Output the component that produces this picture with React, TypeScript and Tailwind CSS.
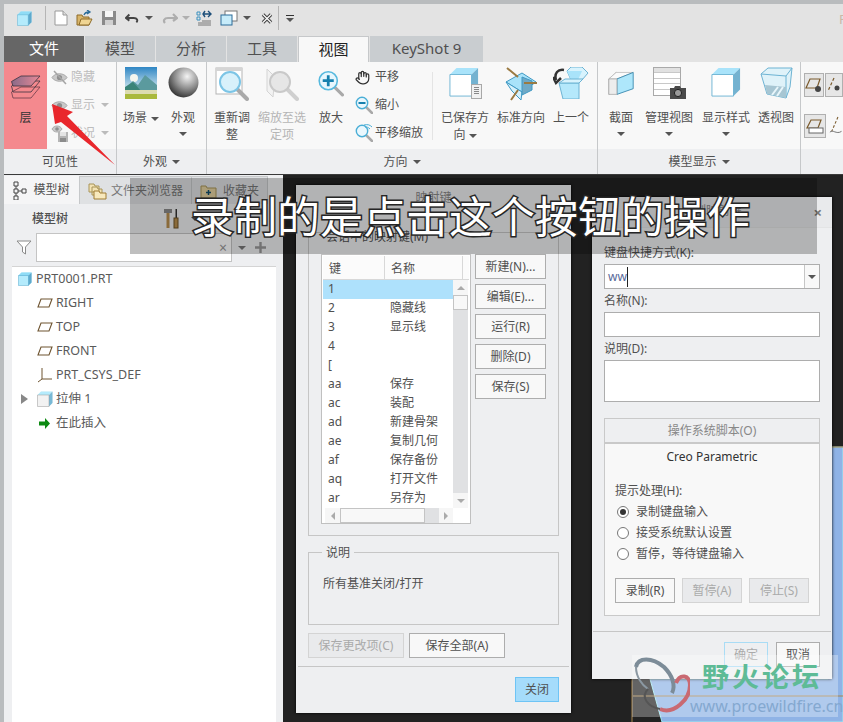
import type { ReactNode } from "react"
import { Hand } from "lucide-react"

const Caret = ({ className = "" }: { className?: string }) => (
  <span className={"inline-block h-0 w-0 border-x-[4px] border-t-[4px] border-x-transparent border-t-[#555] " + className} />
)

// cube with three faces, used all over the ribbon
function Cube({ size = 32, top = "#a9e3fa", side = "#74b2d0", front = "#ffffff", line = "#6db3d3" }: { size?: number; top?: string; side?: string; front?: string; line?: string }) {
  return (
    <svg width={size} height={size} viewBox="0 0 32 32">
      <path d="M1 8 L8 1 H31 V24 L24 31 H1 Z" fill={front} />
      <path d="M1 8 L8 1 H31 L24 8 Z" fill={top} />
      <path d="M24 8 L31 1 V24 L24 31 Z" fill={side} />
      <path d="M1 8 H24 V31 H1 Z" fill="none" stroke={line} strokeWidth="1" />
    </svg>
  )
}

function LayersIcon() {
  return (
    <svg width="32" height="24" viewBox="0 0 32 24">
      <defs>
        <linearGradient id="lay" x1="0" x2="1">
          <stop offset="0" stopColor="#8a6a88" />
          <stop offset="1" stopColor="#e88a98" />
        </linearGradient>
      </defs>
      <path d="M1.5 17 L11 12 H30 L21 23 H3 Z" fill="none" stroke="#6b3c4a" strokeWidth="0.8" />
      <path d="M1.5 11 L11 6 H30 L21 17 H3 Z" fill="none" stroke="#3a3340" strokeWidth="0.8" />
      <path d="M1.5 6.5 L11 1 H30 L21 11 H3 Z" fill="url(#lay)" stroke="#3a3340" strokeWidth="0.8" />
    </svg>
  )
}

function Eye({ slash = false }: { slash?: boolean }) {
  return (
    <svg width="17" height="15" viewBox="0 0 17 15">
      <path d="M1 7.5 C4 2.5 13 2.5 16 7.5 C13 12.5 4 12.5 1 7.5 Z" fill="#c9c9c9" stroke="#aaa" />
      <circle cx="8.5" cy="7.5" r="2.6" fill="#8f8f8f" />
      {slash && <path d="M3 1 L15 14" stroke="#a5a5a5" strokeWidth="1.5" />}
    </svg>
  )
}

function EyeSave() {
  return (
    <svg width="18" height="18" viewBox="0 0 18 18">
      <path d="M1 5 C3 1 9 1 11 5 C9 9 3 9 1 5 Z" fill="#c9c9c9" stroke="#aaa" />
      <circle cx="6" cy="5" r="1.8" fill="#8f8f8f" />
      <path d="M7 8 H17 V18 H7 Z" fill="#b5b5b5" />
      <path d="M9 8 H15 V12 H9 Z" fill="#e4e4e4" />
      <path d="M9 14 H15 V18 H9 Z" fill="#8c8c8c" />
    </svg>
  )
}

function Scene() {
  return (
    <svg width="32" height="32" viewBox="0 0 32 32">
      <defs>
        <linearGradient id="sky" x1="0" x2="0" y1="0" y2="1">
          <stop offset="0" stopColor="#2f86c4" />
          <stop offset="1" stopColor="#cfe6ee" />
        </linearGradient>
      </defs>
      <rect width="32" height="22" fill="url(#sky)" />
      <circle cx="9" cy="11" r="4" fill="#f4f6ee" />
      <path d="M0 21 L8 14 L13 18 L20 8 L32 18 V24 H0 Z" fill="#5b9a9e" />
      <path d="M0 20 L8 15 L16 24 H0 Z" fill="#3a8478" />
      <rect y="23" width="32" height="4" fill="#dcdcb0" />
      <rect y="27" width="32" height="5" fill="#a9b93c" />
    </svg>
  )
}

function Sphere() {
  return (
    <svg width="31" height="31" viewBox="0 0 31 31">
      <defs>
        <radialGradient id="sph" cx="0.62" cy="0.3" r="0.75">
          <stop offset="0" stopColor="#f4f4f4" />
          <stop offset="0.55" stopColor="#8c8c8c" />
          <stop offset="1" stopColor="#2f2f2f" />
        </radialGradient>
      </defs>
      <circle cx="15.5" cy="15.5" r="15" fill="url(#sph)" />
    </svg>
  )
}

function Refit({ dim = false }: { dim?: boolean }) {
  const c = dim ? "#cfcfcf" : "#a9a9a9"
  return (
    <svg width="34" height="34" viewBox="0 0 34 34">
      {!dim && <rect x="1" y="1" width="26" height="26" fill="#fff" stroke="#b5b5b5" />}
      {!dim && <rect x="1" y="1" width="26" height="3" fill="#d5d5d5" />}
      {dim && <path d="M2 2 L10 10 L8 30 L2 24 Z" fill="#f2f2f2" stroke="#d4d4d4" />}
      <path d="M22 22 L32 32" stroke={c} strokeWidth="4" strokeLinecap="round" />
      <circle cx="15" cy="15" r="10" fill={dim ? "#e6e6e6" : "#d8f1fb"} stroke={dim ? "#c9c9c9" : "#7cc5e6"} strokeWidth="2" />
    </svg>
  )
}

function ZoomIn() {
  return (
    <svg width="33" height="33" viewBox="0 0 33 33">
      <path d="M21 21 L31 31" stroke="#a9a9a9" strokeWidth="4" strokeLinecap="round" />
      <circle cx="13" cy="13" r="11.5" fill="#e6f6fd" stroke="#56b9de" strokeWidth="2" />
      <path d="M13 6 V20 M6 13 H20" stroke="#1580ae" strokeWidth="3.5" />
    </svg>
  )
}

function SmallLens({ kind }: { kind: "minus" | "pan" }) {
  return (
    <svg width="18" height="18" viewBox="0 0 18 18">
      <path d="M11 11 L17 17" stroke="#a9a9a9" strokeWidth="2.5" strokeLinecap="round" />
      <circle cx="7" cy="7" r="5.7" fill="#eaf7fd" stroke="#4aaed6" strokeWidth="1.4" />
      {kind === "minus" && <path d="M3.5 7 H10.5" stroke="#1580ae" strokeWidth="2" />}
      {kind === "pan" && <path d="M9 1 C13 0 15 1 17 3 M10 3 C12 3 13 3 15 5" stroke="#4aaed6" fill="none" />}
    </svg>
  )
}

function SavedView() {
  return (
    <div className="relative h-[32px] w-[32px]">
      <Cube size={30} />
      <div className="absolute right-[-1px] bottom-0 flex h-[15px] w-[11px] flex-col gap-[1px] border border-[#a8a8a8] bg-[#f1f1f1] p-[2px]">
        <span className="h-px bg-[#888]" />
        <span className="h-px bg-[#888]" />
        <span className="h-px bg-[#888]" />
        <span className="h-px bg-[#888]" />
      </div>
    </div>
  )
}

function StdView() {
  return (
    <svg width="34" height="34" viewBox="0 0 34 34">
      <path d="M2 15 L18 6 L32 15 L18 25 Z" fill="#a9e3fa" stroke="#3f99c4" />
      <path d="M2 15 L18 25 L17 33 L8 24 Z" fill="#d6f1fb" stroke="#3f99c4" />
      <path d="M18 10 L28 14 V23 L18 28 Z" fill="#6fa9c6" stroke="#3f99c4" />
      <path d="M3 1 L14 10 M20 16 H33 M14 23 L7 33" stroke="#9a7a42" strokeWidth="2" />
    </svg>
  )
}

function PrevView() {
  return (
    <svg width="36" height="32" viewBox="0 0 36 32">
      <path d="M14 4 L18 0 H29 L35 6 L29 13 H18 Z" fill="#d8f3fd" stroke="#6db3d3" />
      <path d="M14 4 H29 L25 13 H18 Z" fill="#a9e3fa" />
      <path d="M6 16 L10 32 H26 V16 Z" fill="#b5e8fb" stroke="#6db3d3" />
      <path d="M6 16 L12 12 H30 L26 16 Z" fill="#d8f3fd" stroke="#6db3d3" />
      <path d="M11 3 C5 2 1 6 3 13 M0 10 L3 16 L8 11" fill="none" stroke="#333" strokeWidth="2.5" />
    </svg>
  )
}

function SectionIcon() {
  return (
    <svg width="32" height="32" viewBox="0 0 32 32">
      <path d="M1 11 L10 3 V23 L1 30 Z" fill="#e9e9e9" stroke="#aaa" />
      <path d="M1 11 L10 3 H31 L11 11 Z" fill="#fbfbfb" stroke="#bbb" />
      <path d="M11 11 L31 3 V23 L11 30 Z" fill="#aee7fb" stroke="#2b7fa8" />
      <path d="M1 11 H11 V30 H1 Z" fill="#ededed" stroke="#aaa" />
    </svg>
  )
}

function ViewTable() {
  return (
    <div className="relative h-[32px] w-[32px]">
      <div className="grid h-[29px] w-[28px] grid-cols-[9px_1fr] grid-rows-5 divide-y divide-[#c8c8c8] border border-[#a9a9a9] bg-white">
        <span className="col-span-2 bg-[#e1e1e1]" />
        <span className="col-span-2" />
        <span className="col-span-2" />
        <span className="col-span-2" />
        <span className="col-span-2" />
      </div>
      <svg className="absolute right-[-1px] bottom-0" width="16" height="13" viewBox="0 0 16 13">
        <path d="M0 2 H4 L5 0 H10 L11 2 H16 V13 H0 Z" fill="#4a4a4a" />
        <circle cx="8" cy="7" r="3.6" fill="#9a9a9a" stroke="#222" />
      </svg>
    </div>
  )
}

function Glass() {
  return (
    <svg width="33" height="32" viewBox="0 0 33 32">
      <path d="M1 7 L8 1 H32 L30 20 L26 31 L7 27 Z" fill="#dff2f9" stroke="#6db3d3" />
      <path d="M1 7 L26 9 L32 1" fill="none" stroke="#6db3d3" />
      <path d="M26 9 V31" stroke="#6db3d3" />
      <path d="M5 18 L26 20 L26 31 L7 27 Z" fill="#a7c6d3" />
      <path d="M12 28 L18 20 M17 29 L23 20" stroke="#e8f6fb" strokeWidth="2" />
    </svg>
  )
}

function Big({ icon, children, caret, dim, className = "" }: { icon: ReactNode; children: ReactNode; caret?: boolean; dim?: boolean; className?: string }) {
  return (
    <div className={"flex shrink-0 flex-col items-center text-center leading-[17px] " + (dim ? "text-[#b5b5b5] " : "") + className}>
      <div className="flex h-[47px] w-full items-start justify-center pt-[5px]">{icon}</div>
      <div>{children}</div>
      {caret && <Caret className="mt-[6px]" />}
    </div>
  )
}

function Small({ icon, text, caret, dim }: { icon: ReactNode; text: string; caret?: boolean; dim?: boolean }) {
  return (
    <div className={"flex h-[28px] items-center whitespace-nowrap " + (dim ? "text-[#bdbdbd]" : "")}>
      <span className="flex w-[20px] shrink-0 justify-start">{icon}</span>
      <span>{text}</span>
      {caret && <Caret className="ml-[6px] border-t-[#bbb]" />}
    </div>
  )
}

function Group({ label, caret, className, children }: { label: string; caret?: boolean; className: string; children: ReactNode }) {
  return (
    <div className={"flex shrink-0 flex-col border-r border-[#c6c8ca] " + className}>
      <div className="flex h-[87px] bg-[#f8f8f8]">{children}</div>
      <div className="flex h-[25px] items-center justify-center gap-[5px] bg-[#eeeff1]">
        {label}
        {caret && <Caret />}
      </div>
    </div>
  )
}

function QuickBar() {
  return (
    <div className="relative flex h-[32px] items-center bg-[#e3e3e3] pb-[4px]">
      <span className="ml-[13px] flex">
        <Cube size={15} side="#5fa9cc" line="#58abd0" top="#8fdcf6" front="#b4ebfc" />
      </span>
      <span className="ml-[13px] h-[24px] w-px bg-[#b5b5b5]" />
      <svg className="ml-[8px]" width="14" height="16" viewBox="0 0 14 16">
        <path d="M1 1 H9 L13 5 V15 H1 Z" fill="#fff" stroke="#999" />
        <path d="M9 1 V5 H13" fill="#ddd" stroke="#999" />
      </svg>
      <svg className="ml-[8px]" width="17" height="16" viewBox="0 0 17 16">
        <path d="M1 5 H6 L7 7 H13 V15 H1 Z" fill="#d8b56a" stroke="#8d6b28" />
        <path d="M3 15 L5 9 H16 L13 15 Z" fill="#f0d593" stroke="#8d6b28" />
        <path d="M8 5 C9 2 11 2 13 2 M11 0 L14 2 L11 4" fill="none" stroke="#2d6d9a" strokeWidth="1.3" />
      </svg>
      <svg className="ml-[8px]" width="16" height="16" viewBox="0 0 16 16">
        <path d="M1 1 H15 V15 H1 Z" fill="#8a8a8a" />
        <path d="M4 1 H12 V7 H4 Z" fill="#f6f6f6" />
        <path d="M4 10 H12 V15 H4 Z" fill="#d0d0d0" />
      </svg>
      <svg className="ml-[8px]" width="14" height="12" viewBox="0 0 16 12">
        <path d="M5 2 L1 6 L5 9 M2 6 H10 C14 6 15 9 13 11" fill="none" stroke="#444" strokeWidth="2.2" />
      </svg>
      <Caret className="ml-[6px] border-t-[#444]" />
      <svg className="ml-[9px]" width="16" height="12" viewBox="0 0 16 12">
        <path d="M11 2 L15 6 L11 9 M14 6 H6 C2 6 1 9 3 11" fill="none" stroke="#aeaeae" strokeWidth="2.2" />
      </svg>
      <Caret className="ml-[4px] border-t-[#b0b0b0]" />
      <svg className="ml-[6px]" width="16" height="16" viewBox="0 0 16 16">
        <path d="M1 2 H4 V5 H1 Z M1 7 H4 V10 H1 Z" fill="none" stroke="#3b90bf" />
        <path d="M6 11 H15 M2 13 H15 M2 15 H15" stroke="#777" />
        <path d="M7 4 H15 M12 1 L15 4 L12 7 M9 1 L7 4 L9 7" fill="none" stroke="#1d4f7a" strokeWidth="1.4" />
      </svg>
      <svg className="ml-[8px]" width="18" height="16" viewBox="0 0 18 16">
        <rect x="5" y="1" width="12" height="10" fill="#fff" stroke="#777" />
        <rect x="1" y="5" width="11" height="10" fill="#c7ecfa" stroke="#2d6d9a" />
      </svg>
      <Caret className="ml-[5px] border-t-[#444]" />
      <svg className="ml-[10px]" width="12" height="11" viewBox="0 0 12 11">
        <path d="M2 1.5 L10 9.5 M10 1.5 L2 9.5" stroke="#444" strokeWidth="3.4" />
        <path d="M2 1.5 L10 9.5 M10 1.5 L2 9.5" stroke="#fff" strokeWidth="1.2" />
      </svg>
      <span className="ml-[5px] h-[24px] w-px bg-[#b5b5b5]" />
      <span className="ml-[7px] flex flex-col items-center gap-[2px]">
        <span className="h-px w-[8px] bg-[#333]" />
        <Caret className="border-t-[#333]" />
      </span>
      <span className="absolute top-[6px] left-[835px] w-[4px] overflow-hidden text-[13px] text-[#c9b8a8]">P</span>
    </div>
  )
}

function Tabs() {
  const tab = "flex h-[26px] w-[70px] items-center justify-center bg-[#c9cdd0] pb-[2px]"
  return (
    <div className="flex h-[26px] gap-px bg-[#e3e3e3] text-[15px] leading-none text-[#505050]">
      <div className="flex h-[26px] w-[80px] items-center justify-center bg-[#666666] pb-[2px] text-white">文件</div>
      <div className={tab}>模型</div>
      <div className={tab}>分析</div>
      <div className={tab}>工具</div>
      <div className="flex h-[27px] w-[71px] items-center justify-center border-x border-t border-[#c6c8ca] bg-[#f8f8f8] pb-[2px] text-[#222]">视图</div>
      <div className="flex h-[26px] w-[113px] items-center justify-center bg-[#c9cdd0] pb-[2px]">KeyShot 9</div>
    </div>
  )
}

function Ribbon() {
  return (
    <div className="flex h-[113px] w-[839px] overflow-hidden border-b border-[#3a3a3a] text-[12px] text-[#505050]">
      <Group label="可见性" className="w-[113px]">
        <div className="flex w-[43px] shrink-0 flex-col items-center bg-[#f4898e] pt-[13px] text-[#333]">
          <LayersIcon />
          <span className="mt-[10px] leading-[17px]">层</span>
        </div>
        <div className="ml-[4px] pt-[1px]">
          <Small dim icon={<Eye slash />} text="隐藏" />
          <Small dim icon={<Eye />} text="显示" caret />
          <Small dim icon={<EyeSave />} text="状况" caret />
        </div>
      </Group>
      <Group label="外观" caret className="w-[90px]">
        <Big className="ml-[4px] w-[40px]" icon={<Scene />}>
          场景 <Caret className="ml-[1px] align-middle" />
        </Big>
        <Big caret className="ml-[4px] w-[36px]" icon={<Sphere />}>外观</Big>
      </Group>
      <Group label="方向" caret className="w-[391px]">
        <Big className="ml-[7px] w-[36px]" icon={<Refit />}>重新调整</Big>
        <Big dim className="ml-[7px] w-[50px]" icon={<Refit dim />}>缩放至选定项</Big>
        <Big className="ml-[11px] w-[26px]" icon={<ZoomIn />}>放大</Big>
        <div className="ml-[11px] w-[70px] pt-[1px]">
          <Small icon={<Hand size={15} color="#333" />} text="平移" />
          <Small icon={<SmallLens kind="minus" />} text="缩小" />
          <Small icon={<SmallLens kind="pan" />} text="平移缩放" />
        </div>
        <span className="mt-[10px] ml-[7px] h-[68px] w-px shrink-0 bg-[#e4e4e4]" />
        <Big className="ml-[7px] w-[50px]" icon={<SavedView />}>
          已保存方向 <Caret className="align-middle" />
        </Big>
        <Big className="ml-[6px] w-[50px]" icon={<StdView />}>标准方向</Big>
        <Big className="ml-[6px] w-[38px]" icon={<PrevView />}>上一个</Big>
      </Group>
      <Group label="模型显示" caret className="w-[203px]">
        <Big caret className="ml-[10px] w-[26px]" icon={<SectionIcon />}>截面</Big>
        <Big caret className="ml-[10px] w-[50px]" icon={<ViewTable />}>管理视图</Big>
        <Big caret className="ml-[7px] w-[50px]" icon={<Cube size={30} />}>显示样式</Big>
        <Big className="ml-[7px] w-[36px]" icon={<Glass />}>透视图</Big>
      </Group>
      <div className="flex w-[42px] shrink-0 flex-col bg-[#eeeff1]">
        <div className="flex h-[87px] flex-col gap-[17px] bg-[#f8f8f8] pt-[11px] pl-[3px]">
          <div className="flex gap-px">
            <span className="flex h-[24px] w-[24px] items-center justify-center border border-[#b0b0b0] bg-[#e6e6e6]">
              <svg width="18" height="16" viewBox="0 0 18 16">
                <path d="M5 2 H15 L12 11 H1 Z" fill="none" stroke="#7a5a2c" strokeWidth="1.2" />
                <circle cx="13" cy="12" r="3" fill="#444" />
              </svg>
            </span>
            <span className="flex h-[24px] w-[24px] items-center justify-center border border-[#b0b0b0] bg-[#e6e6e6]">
              <svg width="16" height="16" viewBox="0 0 16 16">
                <path d="M8 1 L2 14" stroke="#7a5a2c" strokeDasharray="3 2" strokeWidth="1.2" />
                <circle cx="11" cy="11" r="2.5" fill="#444" />
              </svg>
            </span>
          </div>
          <div className="flex gap-[3px]">
            <span className="flex h-[24px] w-[24px] items-center justify-center border border-[#b0b0b0] bg-[#e6e6e6]">
              <svg width="18" height="16" viewBox="0 0 18 16">
                <path d="M5 2 H15 L12 10 H1 Z" fill="none" stroke="#7a5a2c" strokeWidth="1.2" />
                <rect x="3" y="10" width="14" height="5" fill="#fff" stroke="#666" />
              </svg>
            </span>
            <svg width="16" height="24" viewBox="0 0 16 24">
              <path d="M10 2 L3 18" stroke="#7a5a2c" strokeDasharray="3 2" strokeWidth="1.2" />
              <path d="M1 19 C4 15 8 22 14 18" fill="none" stroke="#666" />
            </svg>
          </div>
        </div>
      </div>
    </div>
  )
}

function TreeRow({ icon, children, arrow, indent = true }: { icon: ReactNode; children: ReactNode; arrow?: boolean; indent?: boolean }) {
  return (
    <div className="relative flex h-[24px] items-center whitespace-nowrap">
      {arrow && <span className="absolute left-[9px] h-0 w-0 border-y-[5px] border-l-[7px] border-y-transparent border-l-[#888]" />}
      <span className={"flex w-[20px] shrink-0 justify-center " + (indent ? "ml-[23px]" : "ml-[3px]")}>{icon}</span>
      <span className="ml-[1px]">{children}</span>
    </div>
  )
}

const PlaneIcon = () => (
  <svg width="16" height="10" viewBox="0 0 16 10">
    <path d="M4 1 H15 L12 9 H1 Z" fill="none" stroke="#6e5430" strokeWidth="1.1" />
  </svg>
)

function LeftPanel() {
  return (
    <div className="flex h-full w-[279px] shrink-0 flex-col bg-[#eeeff1] text-[#505050]">
      <div className="mt-[1px] flex h-[28px] text-[12px]">
        <div className="flex w-[76px] items-center justify-center gap-[6px] border-r border-[#c6c8ca] bg-[#f5f5f6]">
          <svg width="14" height="19" viewBox="0 0 14 19">
            <path d="M1 1 H5 V5 H1 Z M1 8 H5 V12 H1 Z M1 15 H5 V19 H1 Z M9 8 H13 V12 H9 Z M3 5 V8 M3 12 V15 M5 10 H9" fill="none" stroke="#444" />
          </svg>
          模型树
        </div>
        <div className="flex w-[112px] items-center justify-center gap-[4px] border-t border-r border-[#c6c8ca] bg-[#dfe1e3] text-[#777]">
          <svg width="19" height="19" viewBox="0 0 19 19">
            <path d="M1 3 H6 L7 5 H11 V11 H1 Z M4 6 H9 L10 8 H14 V14 H4 Z" fill="#f3e3b4" stroke="#a89458" />
            <path d="M6 10 H11 L12 12 H18 V18 H6 Z" fill="#f8e9bd" stroke="#a07c35" />
          </svg>
          文件夹浏览器
        </div>
        <div className="flex w-[76px] items-center justify-center gap-[6px] border-t border-r border-[#c6c8ca] bg-[#dfe1e3] text-[#777]">
          <svg width="17" height="15" viewBox="0 0 17 15">
            <path d="M1 3 H6 L7 5 H16 V15 H1 Z" fill="#e4d2a0" stroke="#a89458" />
            <path d="M8.5 7 V12 M6 9.5 H11" stroke="#14506e" strokeWidth="1.5" />
          </svg>
          收藏夹
        </div>
      </div>
      <div className="flex h-[29px] items-center text-[12px] font-medium">
        <span className="ml-[28px]">模型树</span>
        <svg className="ml-[95px]" width="17" height="21" viewBox="0 0 17 21">
          <path d="M1 1 H9 V5 H1 Z" fill="#8a8a8a" />
          <rect x="3.5" y="5" width="3" height="15" fill="#b98f4f" />
          <rect x="12.5" y="1" width="1.5" height="9" fill="#333" />
          <rect x="11" y="10" width="4" height="10" fill="#b98f4f" stroke="#6c5226" />
        </svg>
        <Caret className="ml-[11px] border-t-[#555]" />
      </div>
      <div className="flex h-[29px] items-center">
        <svg className="ml-[12px]" width="16" height="15" viewBox="0 0 16 15">
          <path d="M1 1 H15 L9.5 7 V14 L6.5 12 V7 Z" fill="#fff" stroke="#8a8a8a" />
        </svg>
        <div className="relative ml-[4px] h-[29px] w-[196px] border border-[#c4c4c4] bg-white">
          <span className="absolute top-[7px] right-[4px] text-[14px] leading-[14px] text-[#999]">×</span>
        </div>
        <Caret className="ml-[6px] border-t-[#777]" />
        <svg className="ml-[9px]" width="11" height="11" viewBox="0 0 11 11">
          <path d="M5.5 0 V11 M0 5.5 H11" stroke="#999" strokeWidth="2.4" />
        </svg>
      </div>
      <div className="mt-[4px] ml-[8px] w-[264px] flex-1 border-t border-[#d4d4d4] bg-white text-[12.5px] text-[#5a5a5a]">
        <TreeRow indent={false} icon={<Cube size={14} front="#b4ebfc" top="#8fdcf6" side="#5fa9cc" line="#3f99c4" />}>PRT0001.PRT</TreeRow>
        <TreeRow icon={<PlaneIcon />}>RIGHT</TreeRow>
        <TreeRow icon={<PlaneIcon />}>TOP</TreeRow>
        <TreeRow icon={<PlaneIcon />}>FRONT</TreeRow>
        <TreeRow
          icon={
            <svg width="16" height="16" viewBox="0 0 16 16">
              <path d="M5 1 V12 L1 15 M5 12 H15" fill="none" stroke="#6e5430" />
            </svg>
          }
        >
          PRT_CSYS_DEF
        </TreeRow>
        <TreeRow arrow icon={<Cube size={16} front="#f2f2f2" top="#b4ebfc" side="#78b9d6" line="#999" />}>
          拉伸 1
        </TreeRow>
        <TreeRow
          icon={
            <svg width="12" height="11" viewBox="0 0 12 11">
              <path d="M0 3.5 H6 V0 L11 5.5 L6 11 V7.5 H0 Z" fill="#0d8a12" />
            </svg>
          }
        >
          在此插入
        </TreeRow>
      </div>
    </div>
  )
}

const btn = "flex items-center justify-center border border-[#adadad] bg-[#f8f8f8] text-[12px] text-[#505050]"
const dimBtn = "flex items-center justify-center border border-[#d4d4d4] bg-[#e9eaec] text-[12px] text-[#aaa]"

const keys: [string, string][] = [
  ["2", "隐藏线"],
  ["3", "显示线"],
  ["4", ""],
  ["[", ""],
  ["aa", "保存"],
  ["ac", "装配"],
  ["ad", "新建骨架"],
  ["ae", "复制几何"],
  ["af", "保存备份"],
  ["aq", "打开文件"],
  ["ar", "另存为"],
]

function MappingDialog() {
  return (
    <div className="absolute top-[10px] left-[13px] flex h-[528px] w-[275px] flex-col bg-[#eeeff1] text-[12px] text-[#505050] shadow-[0_0_3px_#000]">
      <div className="h-[24px] pt-[6px] text-center leading-[14px] text-[#888]">映射键</div>
      <div className="relative mx-[12px] mt-[23px] h-[304px] border border-[#c6c6c6]">
        <span className="absolute top-[-4px] left-[16px] bg-[#eeeff1] px-[1px] leading-[16px]">会话中的映射键(M)</span>
        <div className="mt-[21px] flex">
          <div className="ml-[12px] h-[270px] w-[150px] border border-[#c0c0c0] bg-white p-px">
            <div className="flex h-[24px] border-b border-[#d8d8d8] bg-[#fbfbfb]">
              <span className="w-[62px] border-r border-[#d8d8d8] pt-[5px] pl-[6px] leading-[16px]">键</span>
              <span className="w-[78px] border-r border-[#d8d8d8] pt-[5px] pl-[6px] leading-[16px]">名称</span>
            </div>
            <div className="flex h-[228px]">
              <div className="w-[130px] shrink-0 leading-[18px]">
                <div className="h-[19px] bg-[#aee1fc] pl-[5px]">1</div>
                {keys.map(([k, n]) => (
                  <div key={k} className="flex h-[19px]">
                    <span className="w-[67px] pl-[5px]">{k}</span>
                    <span>{n}</span>
                  </div>
                ))}
              </div>
              <div className="flex w-[15px] flex-col bg-[#e0e1e3]">
                <span className="flex h-[15px] items-center justify-center bg-[#f6f6f6]">
                  <Caret className="rotate-180 border-t-[#aaa]" />
                </span>
                <span className="h-[15px] border border-[#c4c4c4] bg-[#f8f8f8]" />
                <span className="flex-1" />
                <span className="flex h-[15px] items-center justify-center bg-[#f6f6f6]">
                  <Caret className="border-t-[#aaa]" />
                </span>
              </div>
            </div>
            <div className="mx-[2px] flex h-[15px] w-[128px] items-center bg-[#f6f6f6]">
              <span className="flex w-[15px] justify-center">
                <span className="h-0 w-0 border-y-[4px] border-r-[4px] border-y-transparent border-r-[#aaa]" />
              </span>
              <span className="h-[15px] w-[85px] border border-[#c4c4c4] bg-[#f8f8f8]" />
              <span className="h-[15px] flex-1 bg-[#e0e1e3]" />
              <span className="flex w-[14px] justify-center">
                <span className="h-0 w-0 border-y-[4px] border-l-[4px] border-y-transparent border-l-[#aaa]" />
              </span>
            </div>
          </div>
          <div className="ml-[4px] flex w-[71px] flex-col gap-[5px]">
            <div className={btn + " h-[25px]"}>新建(N)...</div>
            <div className={btn + " h-[25px]"}>编辑(E)...</div>
            <div className={btn + " h-[25px]"}>运行(R)</div>
            <div className={btn + " h-[25px]"}>删除(D)</div>
            <div className={btn + " h-[25px]"}>保存(S)</div>
          </div>
        </div>
      </div>
      <div className="relative mx-[12px] mt-[16px] h-[73px] border border-[#c6c6c6]">
        <span className="absolute top-[-8px] left-[13px] bg-[#eeeff1] px-[4px] leading-[16px]">说明</span>
        <div className="mt-[23px] ml-[14px] leading-[16px]">所有基准关闭/打开</div>
      </div>
      <div className="mx-[12px] mt-[8px] flex gap-[5px]">
        <div className={dimBtn + " h-[25px] w-[96px]"}>保存更改项(C)</div>
        <div className={btn + " h-[25px] w-[96px]"}>保存全部(A)</div>
      </div>
      <div className="mx-[2px] mt-[8px] border-t border-[#c6c6c6]" />
      <div className="mt-[10px] flex justify-end pr-[12px]">
        <div className="flex h-[25px] w-[44px] items-center justify-center border border-[#6ec4f5] bg-[#a5dcfb]">关闭</div>
      </div>
    </div>
  )
}

function Radio({ on, children }: { on?: boolean; children: string }) {
  return (
    <div className="flex h-[21px] items-center">
      <span className="flex h-[12px] w-[12px] items-center justify-center rounded-full border border-[#777] bg-white">
        {on && <span className="h-[6px] w-[6px] rounded-full bg-[#333]" />}
      </span>
      <span className="ml-[7px]">{children}</span>
    </div>
  )
}

function RecordDialog() {
  const field = "h-[25px] border border-[#adadad] bg-white"
  return (
    <div className="absolute top-[22px] left-[309px] flex h-[482px] w-[240px] flex-col bg-[#eeeff1] text-[12px] text-[#505050] shadow-[0_0_3px_#000]">
      <div className="relative h-[31px] border-b border-[#e3e4e5] bg-[#e9eaec] pt-[7px] text-center leading-[14px] text-[#888]">
        录制映射键
        <span className="absolute top-[6px] right-[10px] text-[15px] leading-[18px] font-bold text-[#777]">×</span>
      </div>
      <div className="flex flex-1 flex-col px-[12px] pt-[17px] leading-[16px]">
        <div>键盘快捷方式(K):</div>
        <div className={field + " mt-[3px] flex items-center"}>
          <span className="ml-[3px] text-[#5a6a9a]">ww</span>
          <span className="h-[20px] w-px bg-[#222]" />
          <span className="ml-auto flex h-full w-[15px] items-center justify-center border-l border-[#c6c6c6] bg-[#f8f8f8]">
            <Caret />
          </span>
        </div>
        <div className="mt-[4px]">名称(N):</div>
        <div className={field + " mt-[3px]"} />
        <div className="mt-[4px]">说明(D):</div>
        <div className="mt-[3px] h-[42px] border border-[#adadad] bg-white" />
        <div className="mt-[16px] flex h-[25px] items-center justify-center border border-[#c9c9c9] text-[#888]">操作系统脚本(O)</div>
        <div className="flex h-[173px] flex-col border border-[#c9c9c9] bg-[#f8f8f8] px-[10px]">
          <div className="mt-[5px] text-center leading-[16px] text-[#333]">Creo Parametric</div>
          <div className="mt-[18px]">提示处理(H):</div>
          <div className="mt-[2px] pl-[2px]">
            <Radio on>录制键盘输入</Radio>
            <Radio>接受系统默认设置</Radio>
            <Radio>暂停，等待键盘输入</Radio>
          </div>
          <div className="mt-[14px] flex gap-[7px]">
            <div className={btn + " h-[25px] w-[60px]"}>录制(R)</div>
            <div className={dimBtn + " h-[25px] w-[60px]"}>暂停(A)</div>
            <div className={dimBtn + " h-[25px] w-[60px]"}>停止(S)</div>
          </div>
        </div>
      </div>
      <div className="mx-[1px] mt-[14px] border-t border-[#c6c6c6]" />
      <div className="flex h-[47px] justify-end gap-[8px] pt-[10px] pr-[12px]">
        <div className="flex h-[25px] w-[44px] items-center justify-center border border-[#a9dcf5] text-[#aaa]">确定</div>
        <div className={btn + " h-[25px] w-[44px]"}>取消</div>
      </div>
    </div>
  )
}

function Watermark() {
  return (
    <div className="absolute top-[480px] left-[349px] flex h-[62px] w-[206px] bg-white/30">
      <svg className="ml-[2px] shrink-0" width="56" height="60" viewBox="0 0 56 60">
        <path d="M2 12 C4 2 18 2 30 12 C38 20 42 30 38 38" fill="none" stroke="#7c8c98" strokeWidth="4" />
        <path d="M2 12 C2 22 8 30 14 34" fill="none" stroke="#8b98a2" strokeWidth="2" />
        <path d="M26 54 C40 60 56 44 56 30 C56 20 46 18 42 28" fill="none" stroke="#c96a72" strokeWidth="4" />
        <path d="M14 34 C6 42 14 52 26 54" fill="none" stroke="#555" strokeWidth="2" />
      </svg>
      <div className="flex flex-col">
        <div className="mt-[7px] ml-[12px] font-['Noto_Sans_CJK_SC',sans-serif] text-[27px] leading-[28px] font-bold tracking-[3px] whitespace-nowrap text-[#5ebb96]">野火论坛</div>
        <div className="mt-[9px] text-[16px] leading-[14px] whitespace-nowrap text-[#84a8d0]">www.proewildfire.cn</div>
      </div>
    </div>
  )
}

export default function App() {
  return (
    <div className="relative h-[722px] w-[843px] overflow-hidden bg-[#b9bcbe] pt-[4px] pl-[4px] font-['Noto_Sans','Noto_Sans_CJK_SC',sans-serif]">
      <QuickBar />
      <Tabs />
      <Ribbon />
      <div className="flex h-[547px]">
        <LeftPanel />
        {/* graphics window, dialogs float on it */}
        <div className="relative h-full flex-1 bg-[#222222]">
          <svg className="absolute inset-0" width="560" height="547" viewBox="0 0 560 547">
            <path d="M367 504 L379 547 H560 V272 H545 V504 Z" fill="#8fb3e6" stroke="#9fe8f0" />
            <path d="M350 521 H560 M349 480 V547 M548 272 H560" stroke="#a8864e" fill="none" />
          </svg>
          <MappingDialog />
          <RecordDialog />
          <Watermark />
        </div>
      </div>

      {/* caption burned into the video */}
      <div className="absolute top-[178px] left-[130px] flex h-[76px] w-[687px] items-start justify-center bg-black/25 pr-[6px]">
        <span className="mt-[11px] text-[43px] leading-[56px] whitespace-nowrap text-white [-webkit-text-stroke:3px_#262626] [paint-order:stroke_fill]">录制的是点击这个按钮的操作</span>
      </div>

      <svg className="absolute top-[100px] left-[48px]" width="72" height="70" viewBox="0 0 72 70">
        <path d="M4 4 L25 12 L19 16 L67 65 L13 22 L7 24 Z" fill="#e9272c" />
      </svg>
    </div>
  )
}
